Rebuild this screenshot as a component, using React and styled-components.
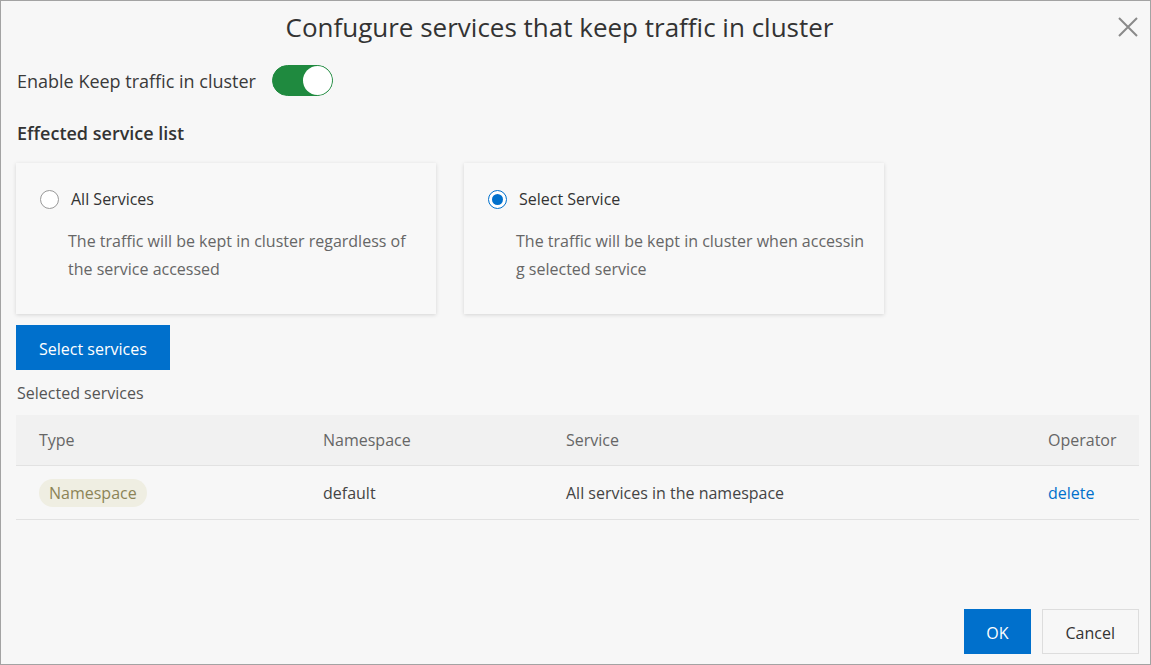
import React, { useState } from 'react';
import styled, { createGlobalStyle } from 'styled-components';

const GlobalStyle = createGlobalStyle`
  html, body {
    margin: 0;
    padding: 0;
    background: #f7f7f7;
  }
  * {
    box-sizing: border-box;
  }
`;

const Dialog = styled.div`
  width: 1151px;
  height: 665px;
  border: 1px solid #a3a3a3;
  background: #f7f7f7;
  display: flex;
  flex-direction: column;
  font-family: "Segoe UI", "Open Sans", "Noto Sans", sans-serif;
  color: #333;
`;

const Header = styled.div`
  display: grid;
  grid-template-columns: 1fr 20px;
  align-items: center;
  height: 55px;
  padding: 0 12px 3px 0;
`;

const Title = styled.h1`
  margin: 0;
  text-align: center;
  font-size: 26px;
  font-weight: 400;
  color: #333;
`;

const CloseButton = styled.button`
  border: none;
  background: none;
  padding: 0;
  width: 20px;
  height: 20px;
  display: flex;
  cursor: pointer;
`;

const Body = styled.div`
  padding: 0 11px 0 15px;
  flex: 1;
  display: flex;
  flex-direction: column;
`;

const ToggleRow = styled.div`
  display: flex;
  align-items: center;
  gap: 16px;
  margin-top: 9px;
  font-size: 18px;
  color: #3a3a3a;
  padding-left: 1px;
`;

const Switch = styled.button`
  width: 61px;
  height: 31px;
  border-radius: 16px;
  border: 1px solid #1f8a3f;
  background: ${(p) => (p.on ? '#1f8a3f' : '#ccc')};
  padding: 0;
  display: flex;
  align-items: center;
  justify-content: ${(p) => (p.on ? 'flex-end' : 'flex-start')};
  cursor: pointer;
`;

const Knob = styled.span`
  width: 29px;
  height: 29px;
  border-radius: 50%;
  background: #fff;
`;

const SectionTitle = styled.h2`
  margin: 25px 0 0 1px;
  font-size: 18px;
  font-weight: 600;
  color: #333;
  line-height: 24px;
`;

const Cards = styled.div`
  display: flex;
  gap: 28px;
  margin-top: 18px;
`;

const Card = styled.label`
  width: 420px;
  height: 151px;
  background: #f8f8f8;
  box-shadow: 0 1px 4px rgba(0, 0, 0, 0.14);
  padding: 25px 18px 0 24px;
  cursor: pointer;
  display: block;
`;

const CardHead = styled.div`
  display: flex;
  align-items: center;
  gap: 12px;
  font-size: 16px;
  color: #333;
  height: 22px;
`;

const Radio = styled.span`
  width: 19px;
  height: 19px;
  border-radius: 50%;
  border: 1px solid ${(p) => (p.checked ? '#0070cc' : '#999')};
  background: #fff;
  display: flex;
  align-items: center;
  justify-content: center;
  &::after {
    content: '';
    width: 11px;
    height: 11px;
    border-radius: 50%;
    background: ${(p) => (p.checked ? '#0070cc' : 'transparent')};
  }
`;

const CardDesc = styled.div`
  margin: 17px 0 0 28px;
  font-size: 16px;
  line-height: 28px;
  color: #666;
  white-space: nowrap;
`;

const PrimaryButton = styled.button`
  background: #0070cc;
  color: #fff;
  border: none;
  font-family: inherit;
  font-size: 16px;
  height: 45px;
  padding: 2px ${(p) => p.pad || 23}px 0;
  cursor: pointer;
`;

const SecondaryButton = styled.button`
  background: #f7f7f7;
  color: #333;
  border: 1px solid #ddd;
  font-family: inherit;
  font-size: 16px;
  height: 45px;
  padding: 2px 23px 0;
  cursor: pointer;
`;

const SelectRow = styled.div`
  margin-top: 11px;
`;

const Caption = styled.div`
  margin: 12px 0 0 1px;
  font-size: 16px;
  color: #555;
  line-height: 22px;
`;

const Table = styled.div`
  margin-top: 11px;
  width: 1123px;
`;

const TableRow = styled.div`
  display: grid;
  grid-template-columns: 284px 243px 482px 1fr;
  align-items: center;
  height: ${(p) => (p.head ? 51 : 54)}px;
  background: ${(p) => (p.head ? '#f1f1f1' : 'transparent')};
  border-bottom: 1px solid #e2e2e2;
  font-size: 16px;
  color: ${(p) => (p.head ? '#666' : '#444')};
`;

const Cell = styled.div`
  padding-left: 23px;
`;

const Tag = styled.span`
  display: inline-block;
  background: #efeee2;
  color: #8c8457;
  border-radius: 14px;
  height: 28px;
  line-height: 28px;
  padding: 0 10px;
`;

const Link = styled.a`
  color: #0070cc;
  text-decoration: none;
  cursor: pointer;
`;

const Footer = styled.div`
  margin-top: auto;
  display: flex;
  justify-content: flex-end;
  gap: 11px;
  padding: 0 11px 10px 0;
`;

const options = [
  {
    key: 'all',
    label: 'All Services',
    lines: ['The traffic will be kept in cluster regardless of', 'the service accessed'],
  },
  {
    key: 'select',
    label: 'Select Service',
    lines: ['The traffic will be kept in cluster when accessin', 'g selected service'],
  },
];

const rows = [
  { type: 'Namespace', namespace: 'default', service: 'All services in the namespace' },
];

const App = () => {
  const [enabled, setEnabled] = useState(true);
  const [scope, setScope] = useState('select');

  return (
    <Dialog>
      <GlobalStyle />
      <Header>
        <Title>Confugure services that keep traffic in cluster</Title>
        <CloseButton aria-label="close">
          <svg width="20" height="20" viewBox="0 0 20 20">
            <path d="M1 1 L19 19 M19 1 L1 19" stroke="#8a8a8a" strokeWidth="2" fill="none" />
          </svg>
        </CloseButton>
      </Header>
      <Body>
        <ToggleRow>
          <span>Enable Keep traffic in cluster</span>
          <Switch on={enabled ? 1 : 0} onClick={() => setEnabled(!enabled)}>
            <Knob />
          </Switch>
        </ToggleRow>

        <SectionTitle>Effected service list</SectionTitle>

        <Cards>
          {options.map((opt) => (
            <Card key={opt.key} onClick={() => setScope(opt.key)}>
              <CardHead>
                <Radio checked={scope === opt.key} />
                <span>{opt.label}</span>
              </CardHead>
              <CardDesc>
                {opt.lines.map((l) => (
                  <div key={l}>{l}</div>
                ))}
              </CardDesc>
            </Card>
          ))}
        </Cards>

        <SelectRow>
          <PrimaryButton>Select services</PrimaryButton>
        </SelectRow>

        <Caption>Selected services</Caption>

        <Table>
          <TableRow head>
            <Cell>Type</Cell>
            <Cell>Namespace</Cell>
            <Cell>Service</Cell>
            <Cell>Operator</Cell>
          </TableRow>
          {rows.map((r) => (
            <TableRow key={r.namespace}>
              <Cell>
                <Tag>{r.type}</Tag>
              </Cell>
              <Cell>{r.namespace}</Cell>
              <Cell>{r.service}</Cell>
              <Cell>
                <Link>delete</Link>
              </Cell>
            </TableRow>
          ))}
        </Table>
      </Body>
      <Footer>
        <PrimaryButton pad={22}>OK</PrimaryButton>
        <SecondaryButton>Cancel</SecondaryButton>
      </Footer>
    </Dialog>
  );
};

export default App;
